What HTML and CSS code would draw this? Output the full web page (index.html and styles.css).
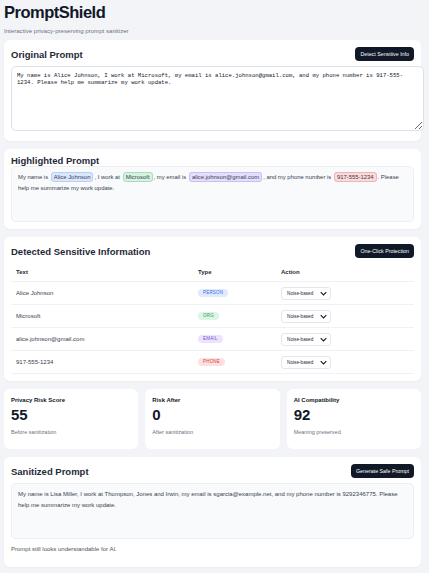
FILE: index.html
```html
<!DOCTYPE html>
<html lang="en">
<head>
  <meta charset="UTF-8">
  <meta name="viewport" content="width=device-width, initial-scale=1.0">
  <title>PromptShield</title>
  <link rel="stylesheet" href="styles.css">
</head>
<body>
  <div class="page">
    <h1>PromptShield</h1>
    <p class="subtitle">Interactive privacy-preserving prompt sanitizer</p>

    <div class="card">
      <div class="card-head">
        <h2>Original Prompt</h2>
        <button class="btn">Detect Sensitive Info</button>
      </div>
      <textarea class="prompt-input">My name is Alice Johnson, I work at Microsoft, my email is alice.johnson@gmail.com, and my phone number is 917-555-1234. Please help me summarize my work update.</textarea>
    </div>

    <div class="card">
      <h2 class="solo">Highlighted Prompt</h2>
      <div class="text-box marked">
        My name is <span class="hl person">Alice Johnson</span>, I work at <span class="hl org">Microsoft</span>, my email is <span class="hl email">alice.johnson@gmail.com</span>, and my phone number is <span class="hl phone">917-555-1234</span>. Please help me summarize my work update.
      </div>
    </div>

    <div class="card">
      <div class="card-head">
        <h2>Detected Sensitive Information</h2>
        <button class="btn">One-Click Protection</button>
      </div>
      <table class="entities">
        <thead>
          <tr><th class="c-text">Text</th><th class="c-type">Type</th><th>Action</th></tr>
        </thead>
        <tbody>
          <tr>
            <td>Alice Johnson</td>
            <td><span class="badge person">PERSON</span></td>
            <td><div class="select">Noise-based <svg viewBox="0 0 10 6"><path d="M1 1l4 4 4-4"/></svg></div></td>
          </tr>
          <tr>
            <td>Microsoft</td>
            <td><span class="badge org">ORG</span></td>
            <td><div class="select">Noise-based <svg viewBox="0 0 10 6"><path d="M1 1l4 4 4-4"/></svg></div></td>
          </tr>
          <tr>
            <td>alice.johnson@gmail.com</td>
            <td><span class="badge email">EMAIL</span></td>
            <td><div class="select">Noise-based <svg viewBox="0 0 10 6"><path d="M1 1l4 4 4-4"/></svg></div></td>
          </tr>
          <tr>
            <td>917-555-1234</td>
            <td><span class="badge phone">PHONE</span></td>
            <td><div class="select">Noise-based <svg viewBox="0 0 10 6"><path d="M1 1l4 4 4-4"/></svg></div></td>
          </tr>
        </tbody>
      </table>
    </div>

    <div class="stats">
      <div class="stat">
        <div class="stat-label">Privacy Risk Score</div>
        <div class="stat-value">55</div>
        <div class="stat-note">Before sanitization</div>
      </div>
      <div class="stat">
        <div class="stat-label">Risk After</div>
        <div class="stat-value">0</div>
        <div class="stat-note">After sanitization</div>
      </div>
      <div class="stat">
        <div class="stat-label">AI Compatibility</div>
        <div class="stat-value">92</div>
        <div class="stat-note">Meaning preserved</div>
      </div>
    </div>

    <div class="card">
      <div class="card-head">
        <h2>Sanitized Prompt</h2>
        <button class="btn">Generate Safe Prompt</button>
      </div>
      <div class="text-box">
        My name is Lisa Miller, I work at Thompson, Jones and Irwin, my email is sgarcia@example.net, and my phone number is 9292346775. Please help me summarize my work update.
      </div>
      <p class="footnote">Prompt still looks understandable for AI.</p>
    </div>
  </div>
</body>
</html>
```

FILE: styles.css
```css
body {
  margin: 0;
  background: #f3f4f7;
  color: #111827;
  font-family: "Liberation Sans", Arial, sans-serif;
}

.page {
  padding: 2px 8px 8px 4px;
}

h1 {
  margin: 0;
  font-size: 16.5px;
  line-height: 20px;
  letter-spacing: -0.5px;
  font-weight: bold;
}

.subtitle {
  margin: 5px 0 5px;
  font-size: 6.1px;
  line-height: 8px;
  color: #6b7280;
}

.card {
  background: #fff;
  border-radius: 6px;
  padding: 7px;
  margin-bottom: 8px;
  box-shadow: 0 1px 2px rgba(0, 0, 0, 0.03);
}

.card-head {
  display: flex;
  justify-content: space-between;
  align-items: center;
  height: 14px;
  margin-bottom: 5px;
}

h2 {
  margin: 0;
  font-size: 9.5px;
  line-height: 11px;
  font-weight: bold;
  color: #1f2937;
}

h2.solo {
  line-height: 10px;
  margin-bottom: 0;
}

.btn {
  background: #111827;
  color: #fff;
  border: none;
  border-radius: 4px;
  height: 14px;
  padding: 0 5px;
  font-family: inherit;
  font-size: 5.3px;
  cursor: pointer;
}

.prompt-input {
  display: block;
  box-sizing: border-box;
  width: calc(100% + 10px);
  height: 65px;
  padding: 5px 5px;
  margin-bottom: 3px;
  border: 1px solid #dde1e7;
  border-radius: 5px;
  font-family: "Liberation Mono", monospace;
  font-size: 5.6px;
  line-height: 7px;
  color: #111827;
  resize: vertical;
}

.text-box {
  background: #f9fafb;
  border: 1px solid #eceef2;
  border-radius: 5px;
  height: 56px;
  box-sizing: border-box;
  padding: 5px 6px;
  font-size: 6px;
  line-height: 10.5px;
  color: #374151;
}

.text-box.marked {
  font-size: 5.9px;
  padding-right: 2px;
}

.hl {
  border-radius: 3px;
  padding: 1px 2px;
  margin: 0 1px;
  border: 1px solid;
}

.hl.person { background: #dbe7fd; border-color: #b9cdf5; }
.hl.org { background: #d8f2e1; border-color: #a9dcbb; }
.hl.email { background: #e5defc; border-color: #c9bdf3; }
.hl.phone { background: #fbdada; border-color: #f0b3b3; }

.entities {
  width: 100%;
  border-collapse: collapse;
  font-size: 6px;
  color: #374151;
}

.entities th {
  text-align: left;
  font-weight: bold;
  color: #1f2937;
  height: 18px;
  padding: 0 5px;
  border-bottom: 1px solid #f0f1f4;
}

.entities td {
  height: 22px;
  padding: 0 5px;
  border-bottom: 1px solid #f0f1f4;
}

.c-text { width: 172px; }
.c-type { width: 73px; }

.badge {
  display: inline-block;
  font-size: 4.5px;
  line-height: 8px;
  padding: 0 5px;
  border-radius: 5px;
  letter-spacing: 0.2px;
}

.badge.person { background: #dfeafe; color: #3b6fd8; }
.badge.org { background: #dcf5e5; color: #2f9e5c; }
.badge.email { background: #ebe4fd; color: #7a4fe0; }
.badge.phone { background: #fde1e1; color: #d64545; }

.select {
  display: inline-flex;
  align-items: center;
  justify-content: space-between;
  width: 50px;
  height: 13px;
  box-sizing: border-box;
  padding: 0 3px 0 5px;
  border: 1px solid #e5e7eb;
  border-radius: 3px;
  font-size: 4.7px;
  color: #1f2937;
  background: #fff;
}

.select svg {
  width: 7px;
  height: 5px;
  fill: none;
  stroke: #111827;
  stroke-width: 1.5;
}

.stats {
  display: grid;
  grid-template-columns: 1fr 1fr 1fr;
  gap: 7px;
  margin-bottom: 8px;
}

.stat {
  background: #fff;
  border-radius: 6px;
  height: 60px;
  box-sizing: border-box;
  padding: 7px;
}

.stat-label {
  font-size: 6px;
  font-weight: bold;
  line-height: 8px;
  color: #111827;
}

.stat-value {
  font-size: 15px;
  font-weight: bold;
  line-height: 16px;
  margin-top: 3px;
}

.stat-note {
  margin-top: 6px;
  font-size: 5.5px;
  color: #6b7280;
}

.footnote {
  margin: 6px 0 7px;
  font-size: 6px;
  line-height: 8px;
  color: #4b5563;
}
```
